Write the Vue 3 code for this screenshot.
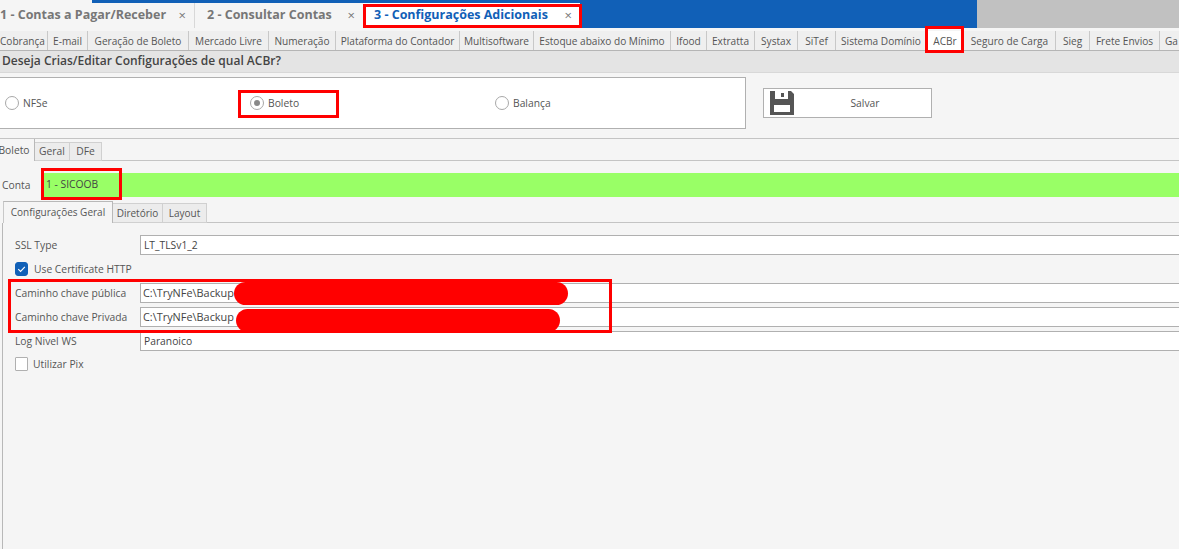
<script setup>
const topTabs = [
  { label: '1 - Contas a Pagar/Receber', w: 195, cls: '' },
  { label: '2 - Consultar Contas', w: 168, cls: '' },
  { label: '3 - Configurações Adicionais', w: 217, cls: 'active' }
]
const moduleTabs = [
  ['Cobrança', 48], ['E-mail', 40], ['Geração de Boleto', 101], ['Mercado Livre', 80],
  ['Numeração', 67], ['Plataforma do Contador', 124], ['Multisoftware', 74], ['Estoque abaixo do Mínimo', 137],
  ['Ifood', 36], ['Extratta', 48], ['Systax', 43], ['SiTef', 38], ['Sistema Domínio', 91],
  ['ACBr', 37], ['Seguro de Carga', 92], ['Sieg', 34], ['Frete Envios', 70], ['Ga', 19]
]
const radios = [
  { label: 'NFSe', w: 245, on: false },
  { label: 'Boleto', w: 245, on: true },
  { label: 'Balança', w: 200, on: false }
]
const subTabs = [['Boleto', 35, true], ['Geral', 35, false], ['DFe', 32, false]]
const innerTabs = [['Configurações Geral', 110, true], ['Diretório', 50, false], ['Layout', 44, false]]
</script>

<template>
  <div class="page">
    <div class="topbar">
      <div class="lip"></div>
      <div class="toprow">
        <div
          v-for="t in topTabs"
          :key="t.label"
          class="toptab"
          :class="t.cls"
          :style="{ width: t.w + 'px' }"
        >
          <span class="toplabel">{{ t.label }}</span>
          <span class="close">×</span>
        </div>
        <div class="blue"></div>
        <div class="grey"></div>
      </div>
    </div>

    <div class="modules">
      <div
        v-for="m in moduleTabs"
        :key="m[0]"
        class="mod"
        :class="{ current: m[0] === 'ACBr' }"
        :style="{ width: m[1] + 'px' }"
      >{{ m[0] }}</div>
    </div>

    <div class="heading">Deseja Crias/Editar Configurações de qual ACBr?</div>

    <div class="chooser">
      <div class="radiobox">
        <div v-for="r in radios" :key="r.label" class="radio" :style="{ width: r.w + 'px' }">
          <span class="dot" :class="{ on: r.on }"></span>{{ r.label }}
        </div>
      </div>
      <button class="save" type="button">
        <svg width="24" height="24" viewBox="0 0 24 24" class="disk">
          <path fill="#555" fill-rule="evenodd" d="M0 0H21L24 3V24H0ZM5 0V8H18V0ZM11 2V6H14V2ZM4 14V21H20V14Z" />
        </svg>
        <span class="savelabel">Salvar</span>
      </button>
    </div>

    <div class="subtabs">
      <div
        v-for="s in subTabs"
        :key="s[0]"
        class="sub"
        :class="{ active: s[2] }"
        :style="{ width: s[1] + 'px' }"
      >{{ s[0] }}</div>
      <div class="rule"></div>
    </div>

    <div class="account">
      <span class="acclabel">Conta</span>
      <div class="accvalue">1 - SICOOB</div>
    </div>

    <div class="innertabs">
      <div
        v-for="s in innerTabs"
        :key="s[0]"
        class="inner"
        :class="{ active: s[2] }"
        :style="{ width: s[1] + 'px' }"
      >{{ s[0] }}</div>
      <div class="rule"></div>
    </div>

    <div class="form">
      <div class="field first">
        <label>SSL Type</label>
        <div class="input">LT_TLSv1_2</div>
      </div>
      <div class="check checked-row">
        <span class="box checked">
          <svg width="14" height="14" viewBox="0 0 14 14">
            <path d="M3.5 7.2 6 9.6 10.6 4.6" fill="none" stroke="#fff" stroke-width="1.2" />
          </svg>
        </span>
        Use Certificate HTTP
      </div>
      <div class="field">
        <label>Caminho chave pública</label>
        <div class="input path">C:\TryNFe\Backup</div>
      </div>
      <div class="field">
        <label>Caminho chave Privada</label>
        <div class="input path">C:\TryNFe\Backup</div>
      </div>
      <div class="field">
        <label>Log Nivel WS</label>
        <div class="input">Paranoico</div>
      </div>
      <div class="check pix">
        <span class="box"></span>
        Utilizar Pix
      </div>
    </div>

    <div class="mark mark-tab"></div>
    <div class="mark mark-acbr"></div>
    <div class="mark mark-boleto"></div>
    <div class="mark mark-conta"></div>
    <div class="mark mark-paths"></div>
    <div class="pill pill-a"></div>
    <div class="pill pill-b"></div>
  </div>
</template>

<style>
html, body { margin: 0; background: #f5f5f5; overflow: hidden; }
</style>

<style scoped>
.page {
  position: relative;
  width: 1179px;
  height: 549px;
  overflow: hidden;
  background: #f5f5f5;
  font-family: "Open Sans", "Liberation Sans", sans-serif;
  font-size: 10.3px;
  color: #444;
}
.topbar { height: 28px; background: #f5f5f5; display: flex; flex-direction: column; }
.lip {
  height: 3px;
  margin-left: 92px;
  margin-right: 202px;
  background: #1160b7;
  flex: none;
}
.toprow { flex: 1; display: flex; margin-top: 0; }
.toptab {
  flex: none;
  box-sizing: border-box;
  display: flex;
  align-items: center;
  justify-content: space-between;
  padding: 0 8px 2px 0;
  background: #f5f5f5;
  color: #777;
  font-weight: 700;
  font-size: 12.5px;
  white-space: nowrap;
  border-right: 1px solid #d8d8d8;
}
.toptab:nth-child(2) { padding-left: 12px; border-right: 0; }
.toptab.active {
  background: #fff;
  color: #1160b7;
  padding-left: 11px;
  padding-right: 8px;
  border-right: 0;
}
.close { font-weight: 400; font-size: 13px; color: #777; }
.blue { width: 397px; flex: none; background: #1160b7; }
.grey { flex: 1; background: #c1c1c1; margin-top: -3px; }

.modules {
  display: flex;
  height: 20px;
  margin-top: 3px;
  border-bottom: 1px solid #b5b5b5;
  box-sizing: border-box;
  background: #e8e8e8;
}
.mod {
  flex: none;
  box-sizing: border-box;
  text-align: center;
  line-height: 20px;
  font-size: 10.1px;
  background: #efefef;
  border-right: 1px solid #c8c8c8;
  color: #555;
  white-space: nowrap;
  overflow: hidden;
}
.mod:first-child { text-align: right; padding-right: 6px; }
.mod:last-child { text-align: left; padding-left: 5px; border-right: 0; }
.mod.current { background: #fff; }

.heading {
  height: 22px;
  box-sizing: border-box;
  line-height: 19px;
  background: #e4e4e4;
  padding-left: 2px;
  font-weight: 600;
  font-size: 12px;
  border-bottom: 1px solid #d8d8d8;
}

.chooser {
  height: 66px;
  border-bottom: 1px solid #c4c4c4;
  display: flex;
  box-sizing: border-box;
  padding-top: 4px;
  align-items: flex-start;
  gap: 17px;
}
.radiobox {
  flex: none;
  box-sizing: border-box;
  width: 746px;
  height: 52px;
  background: #fff;
  border: 1px solid #b0b0b0;
  border-left: 0;
  display: flex;
  align-items: center;
  padding-left: 5px;
}
.radio { display: flex; align-items: center; gap: 4px; color: #555; }
.dot {
  box-sizing: border-box;
  width: 14px;
  height: 14px;
  border: 1px solid #a8a8a8;
  border-radius: 50%;
  background: #fff;
  flex: none;
  display: flex;
  align-items: center;
  justify-content: center;
}
.dot.on::after {
  content: "";
  width: 6px;
  height: 6px;
  border-radius: 50%;
  background: #888;
}
.save {
  flex: none;
  box-sizing: border-box;
  width: 169px;
  height: 30px;
  margin-top: 11px;
  padding: 0 0 0 6px;
  display: flex;
  align-items: center;
  background: #fff;
  border: 1px solid #b0b0b0;
  font: inherit;
  color: #555;
}
.disk { flex: none; }
.savelabel { flex: 1; text-align: center; padding-left: 5px; }

.subtabs, .innertabs { display: flex; align-items: stretch; }
.subtabs { height: 22px; }
.sub, .inner {
  flex: none;
  box-sizing: border-box;
  text-align: center;
  white-space: nowrap;
  color: #555;
  background: #ececec;
  border: 1px solid #d0d0d0;
  border-left: 0;
  margin-top: 3px;
  line-height: 16px;
}
.sub.active {
  background: #f5f5f5;
  border-top: 0;
  border-bottom: 0;
  margin-top: 0;
  line-height: 23px;
  border-right-color: #b8b8b8;
  text-indent: -6px;
}
.rule { flex: 1; border-bottom: 1px solid #c4c4c4; }

.account {
  display: flex;
  align-items: center;
  height: 24px;
  margin-top: 12px;
  padding-left: 2px;
}
.acclabel { width: 39px; flex: none; color: #555; }
.accvalue {
  flex: 1;
  align-self: stretch;
  line-height: 23px;
  padding-left: 5px;
  background: #99ff66;
  color: #444;
  box-sizing: border-box;
}

.innertabs { height: 22px; margin-top: 4px; padding-left: 3px; }
.inner { margin-top: 2px; line-height: 18px; font-size: 10px; }
.inner.active {
  background: #f5f5f5;
  border-left: 1px solid #c8c8c8;
  border-top-color: #b8b8b8;
  border-right-color: #b8b8b8;
  border-bottom: 0;
  line-height: 21px;
  margin-top: 0;
}

.form {
  margin-left: 2px;
  border-left: 1px solid #b8b8b8;
  height: 326px;
  box-sizing: border-box;
  padding-left: 12px;
  padding-top: 12px;
}
.field { display: flex; align-items: center; height: 20px; margin-bottom: 4px; }
.field label { width: 125px; flex: none; color: #555; line-height: 20px; }
.input {
  flex: 1;
  box-sizing: border-box;
  height: 20px;
  line-height: 18px;
  background: #fff;
  border: 1px solid #b0b0b0;
  border-right: 0;
  padding-left: 3px;
  color: #444;
}
.input.path { font-size: 10.9px; padding-left: 2px; }
.check { display: flex; align-items: center; color: #555; }
.check.checked-row { height: 14px; margin-top: 7px; margin-bottom: 7px; gap: 6px; }
.check.pix { height: 14px; margin-top: 6px; gap: 5px; }
.box {
  box-sizing: border-box;
  width: 13px;
  height: 14px;
  border: 1px solid #b0b0b0;
  background: #fff;
  border-radius: 1px;
  display: inline-flex;
}
.box.checked { background: #1160b7; border-color: #1160b7; border-radius: 3px; }
.box.checked svg { margin: -1px; }

.mark { position: absolute; box-sizing: border-box; border: 3px solid #f00; }
.mark-tab { left: 363px; top: 4px; width: 219px; height: 24px; }
.mark-acbr { left: 925px; top: 26px; width: 39px; height: 27px; }
.mark-boleto { left: 238px; top: 90px; width: 101px; height: 28px; }
.mark-conta { left: 41px; top: 168px; width: 81px; height: 32px; }
.mark-paths { left: 8px; top: 279px; width: 604px; height: 54px; }
.pill { position: absolute; background: #f00; border-radius: 12px; height: 23px; }
.pill-a { left: 234px; top: 282px; width: 334px; }
.pill-b { left: 236px; top: 309px; width: 324px; }
</style>
